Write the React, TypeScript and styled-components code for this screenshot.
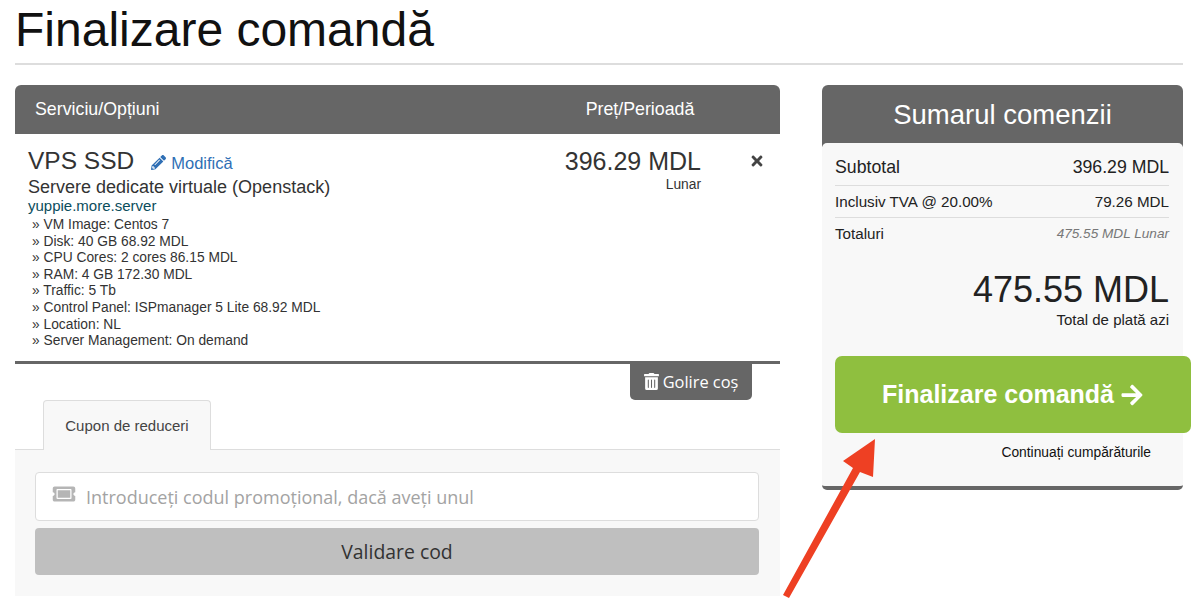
import React from "react";
import styled, {createGlobalStyle} from "styled-components";
import {FaArrowRight, FaPencilAlt, FaTicketAlt, FaTimes, FaTrashAlt} from "react-icons/fa";

const OPTIONS = [
  "VM Image: Centos 7",
  "Disk: 40 GB 68.92 MDL",
  "CPU Cores: 2 cores 86.15 MDL",
  "RAM: 4 GB 172.30 MDL",
  "Traffic: 5 Tb",
  "Control Panel: ISPmanager 5 Lite 68.92 MDL",
  "Location: NL",
  "Server Management: On demand",
];

const GlobalStyle = createGlobalStyle`
    html, body {
        margin: 0;
        padding: 0;
        background: #fff;
        overflow: hidden;
    }

    body {
        font-family: "Liberation Sans", Arial, sans-serif;
        color: #333;
    }
`;

const Page = styled.div`
    position: relative;
    width: 1200px;
    height: 611px;
    padding: 0 17px 0 15px;
    box-sizing: border-box;
    overflow: hidden;
`;

const Title = styled.h1`
    margin: 0 0 20px;
    height: 63px;
    line-height: 60px;
    font-size: 48px;
    font-weight: 400;
    color: #111;
    border-bottom: 2px solid #ddd;
`;

const Columns = styled.div`
    display: flex;
    gap: 42px;
    align-items: flex-start;
`;

const Main = styled.div`
    width: 765px;
`;

const Side = styled.div`
    width: 361px;
`;

const TableHead = styled.div`
    display: flex;
    align-items: center;
    height: 49px;
    padding: 0 0 0 20px;
    background: #666;
    color: #fff;
    font-size: 17.8px;
    border-radius: 6px 6px 0 0;
`;

const ServiceHeading = styled.div`
    flex: 1;
`;

const PriceHeading = styled.div`
    width: 110px;
    margin-right: 85px;
    text-align: center;
    white-space: nowrap;
`;

const Item = styled.div`
    display: flex;
    height: 230px;
    padding: 12px 0 0 13px;
    box-sizing: border-box;
    border-bottom: 3px solid #666;
`;

const ItemInfo = styled.div`
    flex: 1;
`;

const ItemName = styled.div`
    display: flex;
    align-items: baseline;
    gap: 16px;
    font-size: 24.5px;
    line-height: 30px;
`;

const EditLink = styled.a`
    display: inline-flex;
    align-items: baseline;
    gap: 4px;
    font-size: 16.5px;
    color: #2f6fb5;

    svg {
        width: 17px;
        height: 15px;
        transform: translateY(1px);
    }
`;

const ItemGroup = styled.div`
    margin-top: -2px;
    font-size: 18px;
    line-height: 22px;
`;

const ItemDomain = styled.div`
    font-size: 15px;
    line-height: 16px;
    color: #0b4d5c;
`;

const OptionList = styled.div`
    margin-top: 3px;
    padding-left: 4px;
    font-size: 13.8px;
    line-height: 16.6px;
`;

const ItemPrice = styled.div`
    width: 140px;
    text-align: right;
    font-size: 25px;
    line-height: 30px;
`;

const Cycle = styled.div`
    margin-top: 1px;
    font-size: 13.8px;
    line-height: 16px;
`;

const RemoveButton = styled.button`
    width: 79px;
    height: 30px;
    padding: 0 0 0 32px;
    border: none;
    background: none;
    color: #444;
    font-size: 16px;
    display: flex;
    align-items: center;
    justify-content: center;
`;

const EmptyRow = styled.div`
    display: flex;
    justify-content: flex-end;
    padding-right: 28px;
`;

const EmptyButton = styled.button`
    display: flex;
    align-items: center;
    justify-content: center;
    gap: 4px;
    width: 122px;
    height: 37px;
    margin-top: -1px;
    padding: 0;
    border: none;
    border-radius: 0 0 5px 5px;
    background: #666;
    color: #fff;
    font-family: "Open Sans", sans-serif;
    font-size: 16.4px;

    svg {
        width: 15px;
        height: 17px;
    }
`;

const TabBar = styled.div`
    display: flex;
    padding-left: 28px;
    height: 50px;
    border-bottom: 1px solid #ddd;
    box-sizing: border-box;
`;

const Tab = styled.div`
    width: 168px;
    height: 50px;
    line-height: 49px;
    box-sizing: border-box;
    text-align: center;
    font-size: 15px;
    color: #444;
    background: #f8f8f8;
    border: 1px solid #ddd;
    border-bottom: none;
    border-radius: 4px 4px 0 0;
`;

const TabPanel = styled.div`
    display: flex;
    flex-direction: column;
    gap: 7px;
    height: 146px;
    padding: 22px 21px 0 20px;
    box-sizing: border-box;
    background: #f8f8f8;
`;

const CouponField = styled.label`
    display: flex;
    align-items: center;
    gap: 10px;
    height: 49px;
    padding: 0 16px;
    box-sizing: border-box;
    background: #fff;
    border: 1px solid #ddd;
    border-radius: 4px;
    color: #b5b5b5;

    svg {
        width: 24px;
        height: 20px;
        margin-top: -6px;
    }
`;

const CouponInput = styled.input`
    flex: 1;
    border: none;
    outline: none;
    padding: 0;
    background: none;
    font-family: "Open Sans", sans-serif;
    font-size: 18px;

    &::placeholder {
        color: #a3a3a3;
        opacity: 1;
    }
`;

const ValidateButton = styled.button`
    height: 47px;
    border: none;
    border-radius: 4px;
    background: #bfbfbf;
    color: #333;
    font-family: "Open Sans", sans-serif;
    font-size: 19.4px;
`;

const SummaryHead = styled.div`
    height: 62px;
    line-height: 59px;
    background: #666;
    color: #fff;
    font-size: 27.5px;
    text-align: center;
    border-radius: 6px 6px 0 0;
`;

const SummaryBody = styled.div`
    height: 347px;
    margin-top: -4px;
    padding: 7px 14px 0 13px;
    box-sizing: border-box;
    background: #f8f8f8;
    border-bottom: 4px solid #666;
    border-radius: 5px;
`;

const SummaryRow = styled.div<{$size: number; $height: number; $line?: boolean}>`
    display: flex;
    justify-content: space-between;
    align-items: center;
    height: ${p => p.$height}px;
    font-size: ${p => p.$size}px;
    color: #222;
    border-bottom: ${p => (p.$line ? "1px solid #ddd" : "none")};
`;

const RecurringTotal = styled.span`
    font-size: 13.6px;
    font-style: italic;
    color: #777;
`;

const GrandTotal = styled.div`
    margin-top: 19px;
    text-align: right;
    font-size: 36px;
    line-height: 43px;
    color: #222;
`;

const GrandLabel = styled.div`
    text-align: right;
    font-size: 15px;
    line-height: 18px;
    color: #222;
`;

const CheckoutButton = styled.button`
    display: flex;
    align-items: center;
    justify-content: center;
    gap: 6px;
    width: 356px;
    height: 77px;
    margin-top: 27px;
    padding: 0;
    border: none;
    border-radius: 7px;
    background: #8fbf3f;
    color: #fff;
    font-family: "Liberation Sans", sans-serif;
    font-size: 25px;
    font-weight: 700;

    svg {
        width: 24px;
        height: 24px;
    }
`;

const ContinueLink = styled.a`
    display: block;
    margin-top: 11px;
    padding-right: 18px;
    text-align: right;
    font-size: 13.8px;
    line-height: 18px;
    color: #111;
`;

const Annotation = styled.svg`
    position: absolute;
    left: 770px;
    top: 425px;
    pointer-events: none;
`;

export default function App() {
  return (
    <Page>
      <GlobalStyle/>
      <Title>Finalizare comandă</Title>
      <Columns>
        <Main>
          <TableHead>
            <ServiceHeading>Serviciu/Opțiuni</ServiceHeading>
            <PriceHeading>Preț/Perioadă</PriceHeading>
          </TableHead>
          <Item>
            <ItemInfo>
              <ItemName>
                VPS SSD
                <EditLink><FaPencilAlt/>Modifică</EditLink>
              </ItemName>
              <ItemGroup>Servere dedicate virtuale (Openstack)</ItemGroup>
              <ItemDomain>yuppie.more.server</ItemDomain>
              <OptionList>
                {OPTIONS.map(option => <div key={option}>» {option}</div>)}
              </OptionList>
            </ItemInfo>
            <ItemPrice>
              396.29 MDL
              <Cycle>Lunar</Cycle>
            </ItemPrice>
            <RemoveButton aria-label="Șterge"><FaTimes/></RemoveButton>
          </Item>
          <EmptyRow>
            <EmptyButton><FaTrashAlt/>Golire coș</EmptyButton>
          </EmptyRow>
          <TabBar>
            <Tab>Cupon de reduceri</Tab>
          </TabBar>
          <TabPanel>
            <CouponField>
              <FaTicketAlt/>
              <CouponInput placeholder="Introduceți codul promoțional, dacă aveți unul"/>
            </CouponField>
            <ValidateButton>Validare cod</ValidateButton>
          </TabPanel>
        </Main>
        <Side>
          <SummaryHead>Sumarul comenzii</SummaryHead>
          <SummaryBody>
            <SummaryRow $size={17.7} $height={35} $line>
              <span>Subtotal</span><span>396.29 MDL</span>
            </SummaryRow>
            <SummaryRow $size={15.2} $height={31} $line>
              <span>Inclusiv TVA @ 20.00%</span><span>79.26 MDL</span>
            </SummaryRow>
            <SummaryRow $size={15.2} $height={31}>
              <span>Totaluri</span><RecurringTotal>475.55 MDL Lunar</RecurringTotal>
            </SummaryRow>
            <GrandTotal>475.55 MDL</GrandTotal>
            <GrandLabel>Total de plată azi</GrandLabel>
            <CheckoutButton>Finalizare comandă <FaArrowRight/></CheckoutButton>
            <ContinueLink>Continuați cumpărăturile</ContinueLink>
          </SummaryBody>
        </Side>
      </Columns>
      <Annotation width="120" height="180" viewBox="770 425 120 180">
        <polygon
          points="783,595 853,468 843,461 875,439 873,477 860,472 789,598"
          fill="#ee4023"
        />
      </Annotation>
    </Page>
  );
}
